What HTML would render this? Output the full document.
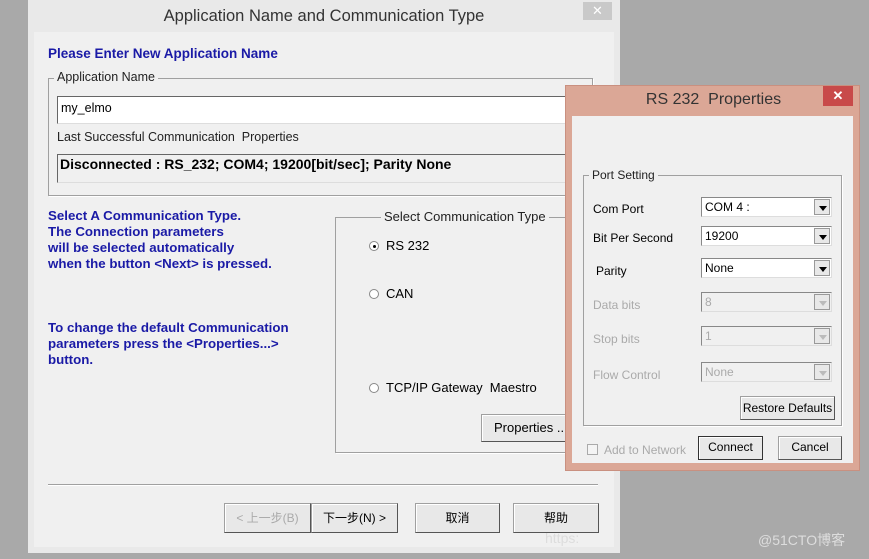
<!DOCTYPE html>
<html><head><meta charset="utf-8"><style>
*{margin:0;padding:0;box-sizing:border-box}
body{width:869px;height:559px;background:#a9a9a9;position:relative;overflow:hidden;font-family:"Liberation Sans","Noto Sans CJK SC",sans-serif;font-size:12px;color:#000}
.a{position:absolute}
.blue{color:#1a1aa6;font-weight:bold;font-size:13.3px;line-height:16px}
.grp{position:absolute;border:1px solid #a0a0a0;box-shadow:1px 1px 0 #fff}
.lg{position:absolute;top:-9px;background:#f0f0f0;padding:0 3px;font-size:12.5px;color:#222}
.btn{position:absolute;background:#e8e8e8;border:1px solid #a0a0a0;border-right-color:#555;border-bottom-color:#555;box-shadow:inset 1px 1px 0 #fff;text-align:center;font-size:12px;line-height:26px}
.cb{position:absolute;background:#fff;border:1px solid #888;border-right-color:#ddd;border-bottom-color:#ddd;height:20px;padding-left:3px;line-height:18px;font-size:12px}
.cb .ar{position:absolute;right:1px;top:1px;width:16px;height:16px;background:#e8e8e8;border:1px solid #999}
.cb .ar:after{content:"";position:absolute;left:4px;top:6px;border:4px solid transparent;border-top:5px solid #000;border-bottom:0}
.dis{background:#f0f0f0;color:#aaa}
.dis .ar:after{border-top-color:#bbb}
.rad{position:absolute;width:10px;height:10px;border-radius:50%;border:1px solid #888;background:#fff}
.pl{position:absolute;font-size:12px}
</style></head><body>
<div class="a" style="left:28px;top:0;width:592px;height:553px;background:#e9e9e9"></div>
<div class="a" style="left:28px;top:0;width:592px;height:32px;text-align:center;font-size:16.5px;line-height:32px;color:#333">Application Name and Communication Type</div>
<div class="a" style="left:583px;top:2px;width:29px;height:18px;background:#c9c9c9;color:#fff;text-align:center;line-height:18px;font-size:13px">✕</div>
<div class="a" style="left:34px;top:32px;width:580px;height:515px;background:#f0f0f0"></div>
<div class="a blue" style="left:48px;top:46px;font-size:13.5px">Please Enter New Application Name</div>
<div class="grp" style="left:48px;top:78px;width:545px;height:118px"><span class="lg" style="left:5px">Application Name</span></div>
<div class="a" style="left:57px;top:96px;width:520px;height:28px;background:#fff;border:1px solid #666;border-right:none;border-bottom-color:#ddd;padding:4px 3px;font-size:12.5px">my_elmo</div>
<div class="a" style="left:54px;top:130px;background:#f0f0f0;padding:0 3px;font-size:12.5px;color:#222">Last Successful Communication &nbsp;Properties</div>
<div class="a" style="left:57px;top:154px;width:520px;height:29px;background:#f0f0f0;border:1px solid #666;border-right:none;border-bottom-color:#ddd;padding:1px 2px;font-size:14px;font-weight:bold">Disconnected : RS_232; COM4; 19200[bit/sec]; Parity None</div>
<div class="a blue" style="left:48px;top:208px">Select A Communication Type.<br>The Connection parameters<br>will be selected automatically<br>when the button &lt;Next&gt; is pressed.</div>
<div class="a blue" style="left:48px;top:320px">To change the default Communication<br>parameters press the &lt;Properties...&gt;<br>button.</div>
<div class="grp" style="left:335px;top:217px;width:240px;height:236px"><span class="lg" style="left:45px;font-size:13px">Select Communication Type</span></div>
<div class="rad" style="left:369px;top:241px"><div style="position:absolute;left:3px;top:3px;width:3px;height:3px;background:#000;border-radius:50%"></div></div>
<div class="a" style="left:386px;top:238px;font-size:13px">RS 232</div>
<div class="rad" style="left:369px;top:289px"></div>
<div class="a" style="left:386px;top:286px;font-size:13px">CAN</div>
<div class="rad" style="left:369px;top:383px"></div>
<div class="a" style="left:386px;top:380px;font-size:13px">TCP/IP Gateway &nbsp;Maestro</div>
<div class="btn" style="left:481px;top:414px;width:90px;height:28px;text-align:left;padding-left:12px;font-size:13px">Properties ...</div>
<div class="a" style="left:48px;top:484px;width:550px;height:1px;background:#a0a0a0;box-shadow:0 1px 0 #fff"></div>
<div class="btn" style="left:224px;top:503px;width:87px;height:30px;color:#aaa;line-height:28px">&lt; 上一步(B)</div>
<div class="btn" style="left:311px;top:503px;width:87px;height:30px;line-height:28px">下一步(N) &gt;</div>
<div class="btn" style="left:415px;top:503px;width:85px;height:30px;line-height:28px">取消</div>
<div class="btn" style="left:513px;top:503px;width:86px;height:30px;line-height:28px">帮助</div>
<div class="a" style="left:545px;top:530px;color:#ddd;font-size:14px">https:</div>
<div class="a" style="left:758px;top:530px;color:#ddd;font-size:14px">@51CTO博客</div>
<div class="a" style="left:565px;top:85px;width:295px;height:386px;background:#dba796;border:1px solid #c99080"></div>
<div class="a" style="left:565px;top:87px;width:295px;text-align:center;font-size:16px;color:#333;line-height:26px;padding-left:2px">RS 232 &nbsp;Properties</div>
<div class="a" style="left:823px;top:86px;width:30px;height:20px;background:#c84a4a;color:#fff;text-align:center;line-height:20px;font-size:13px;font-weight:bold">✕</div>
<div class="a" style="left:572px;top:116px;width:281px;height:347px;background:#f0f0f0"></div>
<div class="grp" style="left:583px;top:175px;width:259px;height:251px"><span class="lg" style="left:5px;font-size:12px;top:-8px">Port Setting</span></div>
<div class="pl" style="left:593px;top:202px">Com Port</div>
<div class="cb" style="left:701px;top:197px;width:131px">COM 4 :<span class="ar"></span></div>
<div class="pl" style="left:593px;top:231px">Bit Per Second</div>
<div class="cb" style="left:701px;top:226px;width:131px">19200<span class="ar"></span></div>
<div class="pl" style="left:596px;top:264px">Parity</div>
<div class="cb" style="left:701px;top:258px;width:131px">None<span class="ar"></span></div>
<div class="pl" style="left:593px;top:298px;color:#aaa">Data bits</div>
<div class="cb dis" style="left:701px;top:292px;width:131px">8<span class="ar"></span></div>
<div class="pl" style="left:593px;top:332px;color:#aaa">Stop bits</div>
<div class="cb dis" style="left:701px;top:326px;width:131px">1<span class="ar"></span></div>
<div class="pl" style="left:593px;top:368px;color:#aaa">Flow Control</div>
<div class="cb dis" style="left:701px;top:362px;width:131px">None<span class="ar"></span></div>
<div class="btn" style="left:740px;top:396px;width:95px;height:24px;line-height:22px">Restore Defaults</div>
<div class="a" style="left:587px;top:444px;width:11px;height:11px;border:1px solid #aaa;background:#f4f4f4"></div>
<div class="a" style="left:604px;top:443px;font-size:12px;color:#aaa">Add to Network</div>
<div class="btn" style="left:698px;top:436px;width:65px;height:24px;line-height:21px;border:1px solid #333">Connect</div>
<div class="btn" style="left:778px;top:436px;width:64px;height:24px;line-height:21px">Cancel</div>
</body></html>
